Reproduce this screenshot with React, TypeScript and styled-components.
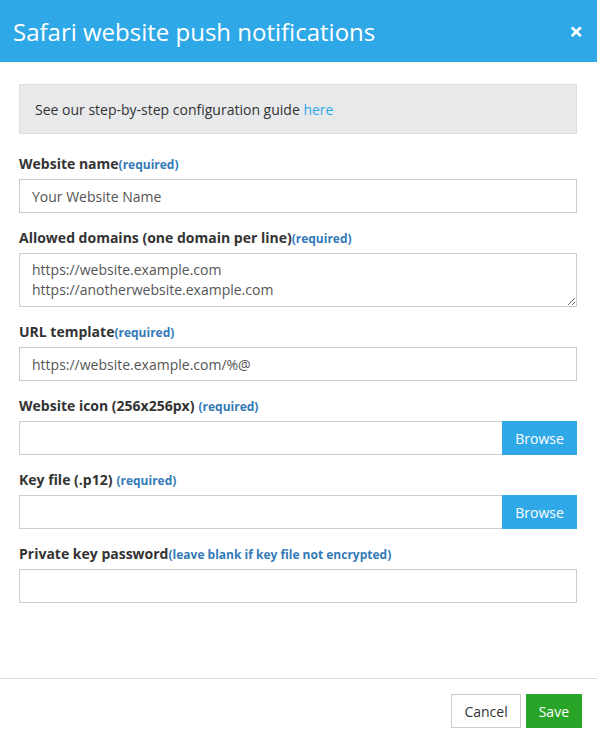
import styled, { createGlobalStyle } from "styled-components";

const GlobalStyle = createGlobalStyle`
  html, body {
    margin: 0;
    padding: 0;
    background: #ffffff;
  }
  * {
    box-sizing: border-box;
  }
  body {
    font-family: "Open Sans", "Noto Sans", sans-serif;
    color: #333333;
  }
`;

const Modal = styled.div`
  width: 597px;
  height: 741px;
  display: flex;
  flex-direction: column;
  background: #ffffff;
`;

const Header = styled.header`
  height: 62px;
  display: flex;
  align-items: center;
  justify-content: space-between;
  padding: 0 14px 0 13px;
  background: #2fa8e8;
  color: #ffffff;
`;

const Title = styled.h1`
  margin: 0;
  font-size: 24px;
  font-weight: 400;
`;

const CloseButton = styled.button`
  border: none;
  background: transparent;
  color: #ffffff;
  font-family: inherit;
  font-size: 24px;
  font-weight: 700;
  line-height: 1;
  padding: 0;
  cursor: pointer;
`;

const Body = styled.div`
  height: 616px;
  padding: 22px 20px 0 19px;
`;

const InfoBox = styled.div`
  height: 50px;
  display: flex;
  align-items: center;
  padding: 0 15px;
  margin-bottom: 20px;
  background: #e8e9eb;
  border: 1px solid #dcdddf;
  font-size: 14px;
  color: #333333;
`;

const GuideLink = styled.a`
  color: #2fa8e8;
  text-decoration: none;
`;

const Field = styled.div`
  margin-bottom: 15px;
`;

const Label = styled.label`
  display: block;
  height: 20px;
  line-height: 20px;
  margin-bottom: 5px;
  font-size: 14px;
  font-weight: 700;
  color: #333333;
`;

const Hint = styled.span<{ $spaced?: boolean }>`
  margin-left: ${(p) => (p.$spaced ? "4px" : "0")};
  font-size: 12px;
  font-weight: 700;
  color: #337ab7;
`;

const TextInput = styled.input`
  display: block;
  width: 100%;
  height: 34px;
  padding: 0 12px;
  border: 1px solid #cccccc;
  border-radius: 0;
  font-family: inherit;
  font-size: 14px;
  color: #555555;
  outline: none;
`;

const TextArea = styled.textarea`
  display: block;
  width: 100%;
  height: 54px;
  padding: 6px 12px;
  border: 1px solid #cccccc;
  border-radius: 0;
  font-family: inherit;
  font-size: 14px;
  line-height: 20px;
  color: #555555;
  outline: none;
`;

const FileGroup = styled.div`
  display: flex;
  height: 34px;
`;

const FileDisplay = styled.div`
  flex: 1;
  border: 1px solid #cccccc;
  border-right: none;
`;

const BrowseButton = styled.button`
  width: 75px;
  height: 34px;
  border: none;
  background: #2fa8e8;
  color: #ffffff;
  font-family: inherit;
  font-size: 14px;
  cursor: pointer;
`;

const Footer = styled.footer`
  flex: 1;
  display: flex;
  justify-content: flex-end;
  align-items: flex-start;
  gap: 5px;
  padding: 15px 15px 0;
  border-top: 1px solid #dddddd;
`;

const Button = styled.button<{ $primary?: boolean }>`
  height: 34px;
  padding: 0 12px;
  border: 1px solid ${(p) => (p.$primary ? "#28a428" : "#cccccc")};
  background: ${(p) => (p.$primary ? "#28a428" : "#ffffff")};
  color: ${(p) => (p.$primary ? "#ffffff" : "#333333")};
  font-family: inherit;
  font-size: 14px;
  cursor: pointer;
`;

export default function App() {
  return (
    <>
      <GlobalStyle />
      <Modal>
        <Header>
          <Title>Safari website push notifications</Title>
          <CloseButton aria-label="Close">×</CloseButton>
        </Header>
        <Body>
          <InfoBox>
            <span>
              See our step-by-step configuration guide&nbsp;
              <GuideLink href="#">here</GuideLink>
            </span>
          </InfoBox>

          <Field>
            <Label>
              Website name<Hint>(required)</Hint>
            </Label>
            <TextInput defaultValue="Your Website Name" />
          </Field>

          <Field>
            <Label>
              Allowed domains (one domain per line)<Hint>(required)</Hint>
            </Label>
            <TextArea
              defaultValue={
                "https://website.example.com\nhttps://anotherwebsite.example.com"
              }
            />
          </Field>

          <Field>
            <Label>
              URL template<Hint>(required)</Hint>
            </Label>
            <TextInput defaultValue="https://website.example.com/%@" />
          </Field>

          <Field>
            <Label>
              Website icon (256x256px)<Hint $spaced>(required)</Hint>
            </Label>
            <FileGroup>
              <FileDisplay />
              <BrowseButton>Browse</BrowseButton>
            </FileGroup>
          </Field>

          <Field>
            <Label>
              Key file (.p12)<Hint $spaced>(required)</Hint>
            </Label>
            <FileGroup>
              <FileDisplay />
              <BrowseButton>Browse</BrowseButton>
            </FileGroup>
          </Field>

          <Field>
            <Label>
              Private key password
              <Hint>(leave blank if key file not encrypted)</Hint>
            </Label>
            <TextInput type="password" />
          </Field>
        </Body>
        <Footer>
          <Button>Cancel</Button>
          <Button $primary>Save</Button>
        </Footer>
      </Modal>
    </>
  );
}
